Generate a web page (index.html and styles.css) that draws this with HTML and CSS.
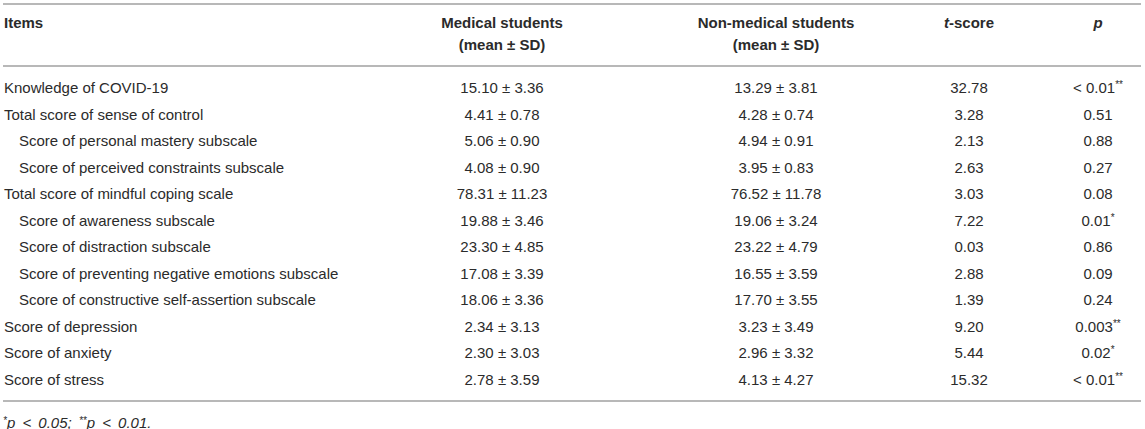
FILE: index.html
```html
<html>
<head>
<title>Table</title>
<link rel="stylesheet" href="styles.css">
</head>
<body>
<div class="table-wrap">
  <table class="data-table">
    <colgroup>
      <col class="col-items">
      <col class="col-group">
      <col class="col-group">
      <col class="col-t">
      <col class="col-p">
    </colgroup>
    <thead>
      <tr>
        <th class="left">Items</th>
        <th>Medical students<br>(mean &plusmn; SD)</th>
        <th>Non-medical students<br>(mean &plusmn; SD)</th>
        <th><i>t</i>-score</th>
        <th class="p-cell"><i>p</i></th>
      </tr>
    </thead>
    <tbody>
      <tr class="first">
        <td class="left">Knowledge of COVID-19</td>
        <td>15.10 &plusmn; 3.36</td>
        <td>13.29 &plusmn; 3.81</td>
        <td>32.78</td>
        <td class="p-cell">&lt; 0.01<sup>**</sup></td>
      </tr>
      <tr>
        <td class="left">Total score of sense of control</td>
        <td>4.41 &plusmn; 0.78</td>
        <td>4.28 &plusmn; 0.74</td>
        <td>3.28</td>
        <td class="p-cell">0.51</td>
      </tr>
      <tr>
        <td class="left sub">Score of personal mastery subscale</td>
        <td>5.06 &plusmn; 0.90</td>
        <td>4.94 &plusmn; 0.91</td>
        <td>2.13</td>
        <td class="p-cell">0.88</td>
      </tr>
      <tr>
        <td class="left sub">Score of perceived constraints subscale</td>
        <td>4.08 &plusmn; 0.90</td>
        <td>3.95 &plusmn; 0.83</td>
        <td>2.63</td>
        <td class="p-cell">0.27</td>
      </tr>
      <tr>
        <td class="left">Total score of mindful coping scale</td>
        <td>78.31 &plusmn; 11.23</td>
        <td>76.52 &plusmn; 11.78</td>
        <td>3.03</td>
        <td class="p-cell">0.08</td>
      </tr>
      <tr>
        <td class="left sub">Score of awareness subscale</td>
        <td>19.88 &plusmn; 3.46</td>
        <td>19.06 &plusmn; 3.24</td>
        <td>7.22</td>
        <td class="p-cell">0.01<sup>*</sup></td>
      </tr>
      <tr>
        <td class="left sub">Score of distraction subscale</td>
        <td>23.30 &plusmn; 4.85</td>
        <td>23.22 &plusmn; 4.79</td>
        <td>0.03</td>
        <td class="p-cell">0.86</td>
      </tr>
      <tr>
        <td class="left sub">Score of preventing negative emotions subscale</td>
        <td>17.08 &plusmn; 3.39</td>
        <td>16.55 &plusmn; 3.59</td>
        <td>2.88</td>
        <td class="p-cell">0.09</td>
      </tr>
      <tr>
        <td class="left sub">Score of constructive self-assertion subscale</td>
        <td>18.06 &plusmn; 3.36</td>
        <td>17.70 &plusmn; 3.55</td>
        <td>1.39</td>
        <td class="p-cell">0.24</td>
      </tr>
      <tr>
        <td class="left">Score of depression</td>
        <td>2.34 &plusmn; 3.13</td>
        <td>3.23 &plusmn; 3.49</td>
        <td>9.20</td>
        <td class="p-cell">0.003<sup>**</sup></td>
      </tr>
      <tr>
        <td class="left">Score of anxiety</td>
        <td>2.30 &plusmn; 3.03</td>
        <td>2.96 &plusmn; 3.32</td>
        <td>5.44</td>
        <td class="p-cell">0.02<sup>*</sup></td>
      </tr>
      <tr class="last">
        <td class="left">Score of stress</td>
        <td>2.78 &plusmn; 3.59</td>
        <td>4.13 &plusmn; 4.27</td>
        <td>15.32</td>
        <td class="p-cell">&lt; 0.01<sup>**</sup></td>
      </tr>
    </tbody>
  </table>
  <p class="footnote"><sup>*</sup>p &lt; 0.05; <sup>**</sup>p &lt; 0.01.</p>
</div>
</body>
</html>
```

FILE: styles.css
```css
body {
  margin: 0;
  background: #fff;
  font-family: "Liberation Sans", Arial, sans-serif;
  color: #2b2b2b;
}

.table-wrap {
  padding: 3px 4px 0 3px;
}

.data-table {
  width: 1138px;
  border-collapse: collapse;
  table-layout: fixed;
  border-top: 2px solid #b8b8b8;
  border-bottom: 2px solid #b8b8b8;
  font-size: 15px;
}

.col-items { width: 362px; }
.col-group { width: 274px; }
.col-t { width: 112px; }
.col-p { width: 116px; }

.data-table th {
  font-weight: bold;
  line-height: 22px;
  padding: 7px 2px 9px 2px;
  vertical-align: top;
  text-align: center;
  border-bottom: 2px solid #b8b8b8;
}

.data-table td {
  text-align: center;
  line-height: 18px;
  padding: 4.25px 2px;
  white-space: nowrap;
}

.data-table .left {
  text-align: left;
  padding-left: 1px;
}

.data-table .sub {
  padding-left: 16px;
}

.data-table .p-cell {
  padding-left: 32px;
}

.data-table tr.first td {
  padding-top: 12.25px;
}

.data-table tr.last td {
  padding-bottom: 11.25px;
}

sup {
  font-size: 10px;
  line-height: 0;
  vertical-align: 5px;
}

.footnote {
  margin: 0;
  padding-top: 12px;
  font-size: 15px;
  font-style: italic;
  word-spacing: 3px;
  line-height: 17px;
}

.footnote sup {
  font-size: 10px;
  vertical-align: 4px;
}
```
